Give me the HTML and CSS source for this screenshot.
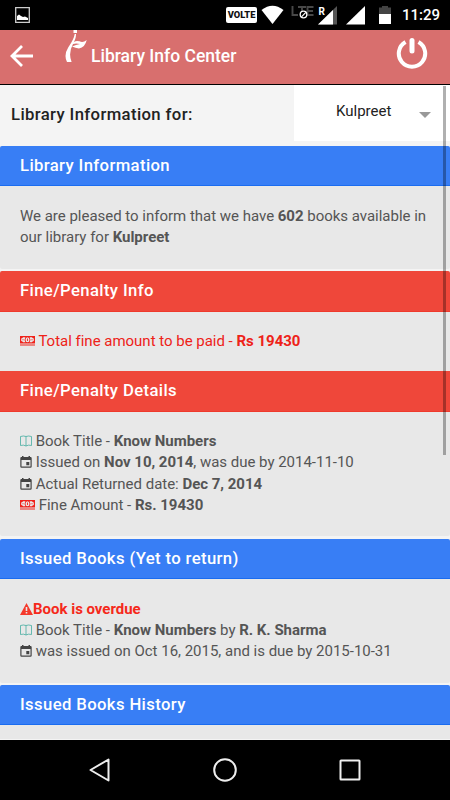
FILE: index.html
```html
<!DOCTYPE html>
<html lang="en">
<head>
<meta charset="utf-8">
<title>Library Info Center</title>
<link rel="stylesheet" href="styles.css">
</head>
<body>
<svg class="defs" width="0" height="0">
  <symbol id="book" viewBox="0 0 12 12"><path d="M.5 1.500Q3.500 .5 6 1.500Q8.500 .5 11.500 1.500V10.500Q8.500 9.500 6 11Q3.500 9.500 .5 10.500ZM6 1.500V11" fill="none" stroke="#3ba99c" stroke-width=".75"/></symbol>
  <symbol id="calendar" viewBox="0 0 12 12"><path fill="#444" fill-rule="evenodd" d="M1.500 1H2V0H3.500V1H8.500V0H10V1H10.500Q11.700 1 11.700 2.200V10.500Q11.700 11.700 10.500 11.700H1.500Q.3 11.700 .3 10.500V2.200Q.3 1 1.500 1ZM1.500 4V10.500H10.500V4ZM6.300 6H9.300V9.200H6.300Z"/></symbol>
  <symbol id="cash" viewBox="0 0 15 10"><path fill="currentColor" fill-rule="evenodd" d="M0 0H15V7.500H0ZM3 1.200Q2.800 2.200 1.200 2.400V5.100Q2.800 5.300 3 6.300H5.400Q3.800 3.700 5.400 1.200ZM9.600 1.200Q11.200 3.700 9.600 6.300H12Q12.200 5.300 13.800 5.100V2.400Q12.200 2.200 12 1.200ZM7.500 1.200A2 2.550 0 1 0 7.500 6.300A2 2.550 0 1 0 7.500 1.200ZM0 8.500H15V9.500H0Z"/><path d="M7.500 2.500V5M3 3.200V4.300M12 3.200V4.300" stroke="currentColor" stroke-width=".9"/></symbol>
</svg>
<div class="screen">
  <div class="status">
    <svg class="photo" width="15" height="16" viewBox="0 0 15 16"><path d="M.7.7H14.300V15.300H.7Z" fill="none" stroke="#ccc" stroke-width="1.300"/><path d="M2 13V9L4 7.500L6 9L8 10L10 9.500L13 11V13Z" fill="#fff"/></svg>
    <span class="volte">VOLTE</span>
    <svg class="signals" width="135" height="22" viewBox="0 0 135 22">
      <path d="M.5 6Q11.500-2.500 22.500 6L11.500 20Z" fill="#fff"/>
      <path d="M31.500 2V11H37M37 3H45M41 3V8M52.500 3H46.500V11H52.500M46.500 7H52" fill="none" stroke="#484848" stroke-width="1.900"/>
      <circle cx="42.500" cy="10.500" r="3.300" fill="#000" stroke="#fff" stroke-width="1.300"/><path d="M40.500 12.800L44.800 8.300" stroke="#fff" stroke-width="1.200"/>
      <path d="M76 2V20.500H57Z" fill="#555"/><path d="M72 6V20.500H57Z" fill="#fff"/>
      <text x="57.500" y="11" class="roam">R</text>
      <path d="M104 2V20.500H85Z" fill="#fff"/>
      <path d="M118 3.500H121V2H127V3.500H130V10H118Z" fill="#444"/><path d="M118 10H130V20H118Z" fill="#fff"/>
    </svg>
    <span class="time">11:29</span>
  </div>
  <header class="header">
    <svg class="back" width="24" height="24" viewBox="0 0 24 24"><path d="M23 12H2M12 2L2 12L12 22" fill="none" stroke="#fff" stroke-width="2.800"/></svg>
    <svg class="logo" width="24" height="33" viewBox="0 0 24 33"><path d="M9.500 0H13V3H9.500ZM10.700 4H12Q12.200 8 9 14Q4 23 7.600 32H3Q-.5 25 4.200 17.500Q10 9 10.700 4ZM9 14Q10 10 15.500 11.300Q19 13 22.700 10Q21 17.500 15 18.500Q11.500 18 8 16.500Q12 14.500 16 14Q12 13 9 14Z" fill="#fff"/></svg>
    <h1 class="title">Library Info Center</h1>
    <svg class="power" width="32" height="32" viewBox="0 0 32 32"><path d="M9.500 5A13.200 13.200 0 1 0 22.500 5" fill="none" stroke="#fff" stroke-width="4"/><path d="M16 3.500V14" stroke="#fff" stroke-width="5" stroke-linecap="round"/></svg>
  </header>
  <main class="content">
    <div class="chooser"><span class="chooser-label">Library Information for:</span><div class="select"><span class="select-value">Kulpreet</span><i class="caret"></i></div></div>
    <section class="card info"><h2 class="bar blue">Library Information</h2><p class="text intro">We are pleased to inform that we have <b>602</b> books available in<br>our library for <b>Kulpreet</b></p></section>
    <section class="card fine"><h2 class="bar red">Fine/Penalty Info</h2><p class="text alert"><svg class="cash"><use href="#cash"/></svg> Total fine amount to be paid - <b>Rs 19430</b></p></section>
    <section class="card details"><h2 class="bar red">Fine/Penalty Details</h2><p class="text"><svg class="icon"><use href="#book"/></svg> Book Title - <b>Know Numbers</b><br><svg class="icon"><use href="#calendar"/></svg> Issued on <b>Nov 10, 2014</b>, was due by 2014-11-10<br><svg class="icon"><use href="#calendar"/></svg> Actual Returned date: <b>Dec 7, 2014</b><br><svg class="cash"><use href="#cash"/></svg> Fine Amount - <b>Rs. 19430</b></p></section>
    <section class="card issued"><h2 class="bar blue">Issued Books (Yet to return)</h2><p class="text loan"><span class="overdue"><svg class="warn" viewBox="0 0 13 12"><path fill="#f5392b" fill-rule="evenodd" d="M6.500 0L13 12H0ZM5.700 4V8H7.300V4ZM5.700 9V10.500H7.300V9Z"/></svg><b>Book is overdue</b></span><br><svg class="icon"><use href="#book"/></svg> Book Title - <b>Know Numbers</b> by <b>R. K. Sharma</b><br><svg class="icon"><use href="#calendar"/></svg> was issued on Oct 16, 2015, and is due by 2015-10-31</p></section>
    <section class="card history"><h2 class="bar blue">Issued Books History</h2></section>
    <div class="scrollbar"></div>
  </main>
  <nav class="nav">
    <svg width="24" height="26" viewBox="0 0 24 26"><path d="M20.500 2.500V23.500L2.500 13Z"/></svg>
    <svg width="26" height="26" viewBox="0 0 26 26"><circle cx="13" cy="13" r="10.800"/></svg>
    <svg width="24" height="26" viewBox="0 0 24 26"><rect x="2.500" y="3.500" width="19" height="19" rx=".5"/></svg>
  </nav>
</div>
</body>
</html>
```
FILE: styles.css
```css
* { box-sizing: border-box; margin: 0; padding: 0; }
body { width: 450px; height: 800px; overflow: hidden; background: #000; font-family: Roboto, sans-serif; }
.defs { position: absolute; }
.screen { display: flex; flex-direction: column; height: 800px; }
.status { height: 30px; display: flex; align-items: flex-start; padding: 0 10px 0 15px; }
.photo { margin-top: 7px; }
.volte { margin: 7px 4px 0 auto; width: 31px; height: 16px; border-radius: 2px; background: #fff; color: #111; font-size: 9.3px; font-weight: 900; line-height: 16px; text-align: center; }
.signals { margin-top: 4px; }
.roam { font-size: 10px; font-weight: 700; fill: #fff; }
.time { color: #fff; font-size: 15px; font-weight: 500; line-height: 17px; margin-top: 7px; width: 38px; margin-left: 6px; white-space: nowrap; }
.header { height: 54px; flex: none; display: flex; background: #d86f6e; }
.back { margin: 14px 0 0 10px; }
.logo { margin: 0 0 0 30px; }
.title { margin-left: 3px; color: #fff; font-size: 17.5px; font-weight: 500; line-height: 53px; white-space: nowrap; }
.power { margin: 7px 22px 0 auto; }
.content { height: 655px; flex: none; margin-top: 1px; position: relative; background: #f4f4f4; overflow: hidden; }
.chooser { height: 61px; display: flex; justify-content: space-between; }
.chooser-label { padding-left: 11px; line-height: 59px; font-size: 16.7px; font-weight: 500; letter-spacing: .37px; color: #222; }
.select { width: 156px; height: 56px; background: #fff; display: flex; padding-left: 42px; }
.select-value { font-size: 15px; line-height: 53px; width: 83px; color: #222; }
.caret { width: 12px; height: 6px; margin-top: 27px; background: #999; clip-path: polygon(0 0, 100% 0, 50% 100%); }
.card { background: #e8e8e8; border-radius: 2px; overflow: hidden; }
.info { height: 123px; margin-bottom: 2px; }
.fine { height: 100px; border-radius: 2px 2px 0 0; }
.details { height: 165px; margin-bottom: 3px; border-radius: 0 0 2px 2px; }
.issued { height: 144px; margin-bottom: 2px; }
.history { height: 54px; border-radius: 2px 2px 0 0; }
.bar { height: 40px; padding-left: 20px; color: #fff; font-size: 16.7px; font-weight: 500; letter-spacing: .37px; line-height: 39px; }
.blue { background: #387ef5; border-bottom: 1px solid #1a6cf0; }
.red { height: 41px; background: #ef473a; border-bottom: 1px solid #ef3a2c; }
.text { padding: 19px 0 0 20px; color: #555; font-size: 15px; line-height: 21.3px; letter-spacing: -.015px; white-space: nowrap; }
.intro { padding-top: 20px; }
.loan { padding-top: 19.5px; }
.text b { font-weight: 700; }
.alert { color: #ee2218; }
.icon { width: 12px; height: 12px; vertical-align: -1px; }
.cash { width: 15px; height: 10px; color: #f0221a; }
.warn { width: 13px; height: 12px; vertical-align: -1px; }
.overdue { color: #f5291b; }
.scrollbar { position: absolute; left: 443px; top: 1px; width: 3px; height: 369px; background: rgba(0, 0, 0, .31); }
.nav { height: 60px; display: flex; justify-content: space-between; align-items: center; padding: 0 88px; }
.nav svg { fill: none; stroke: #eee; stroke-width: 2; stroke-linejoin: round; }
```
